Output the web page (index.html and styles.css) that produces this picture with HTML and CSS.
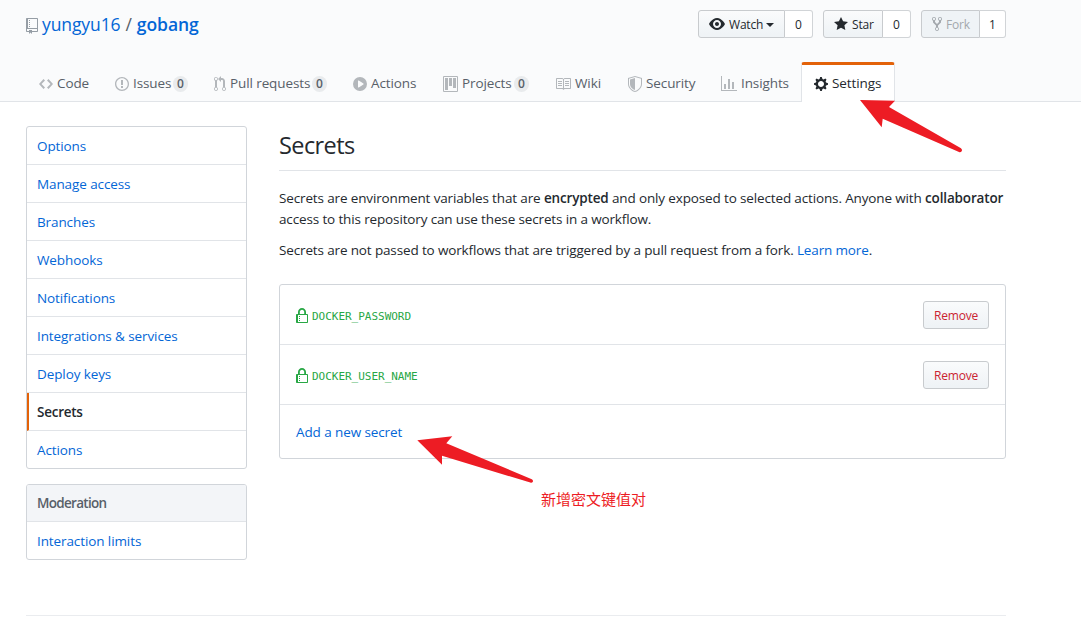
FILE: index.html
```html
<!DOCTYPE html>
<html lang="en">
<head>
<meta charset="utf-8">
<title>Secrets · gobang</title>
<link rel="stylesheet" href="styles.css">
</head>
<body>
<header class="pagehead">
  <div class="pagehead-top">
    <h1 class="repo-title">
      <svg class="repo-icon" width="12" height="16" viewBox="0 0 12 16"><path d="M4 9H3V8h1v1zm0-3H3v1h1V6zm0-2H3v1h1V4zm0-2H3v1h1V2zm8-1v12c0 .55-.45 1-1 1H6v2l-1.500-1.500L3 16v-2H1c-.55 0-1-.45-1-1V1c0-.55.45-1 1-1h10c.55 0 1 .45 1 1zm-1 10H1v2h2v-1h3v1h5v-2zm0-10H2v9h9V1z"/></svg>
      <a class="owner" href="#">yungyu16</a><span class="slash">/</span><a class="repo" href="#">gobang</a>
    </h1>
    <div class="social">
      <div class="social-group watch">
        <button class="btn social-btn"><svg width="16" height="16" viewBox="0 0 16 16"><path d="M8.060 2C3 2 0 8 0 8s3 6 8.060 6C13 14 16 8 16 8s-3-6-7.940-6zM8 12c-2.200 0-4-1.780-4-4 0-2.200 1.800-4 4-4 2.220 0 4 1.800 4 4 0 2.220-1.780 4-4 4zm2-4c0 1.110-.89 2-2 2-1.110 0-2-.89-2-2 0-1.110.89-2 2-2 1.110 0 2 .89 2 2z"/></svg><span>Watch</span><i class="caret"></i></button><a class="social-count" href="#">0</a>
      </div>
      <div class="social-group star">
        <button class="btn social-btn"><svg width="14" height="16" viewBox="0 0 14 16"><path d="M14 6l-4.900-.64L7 1 4.900 5.360 0 6l3.600 3.260L2.670 14 7 11.670 11.330 14l-.93-4.740L14 6z"/></svg><span>Star</span></button><a class="social-count" href="#">0</a>
      </div>
      <div class="social-group fork">
        <button class="btn social-btn disabled"><svg width="10" height="16" viewBox="0 0 10 16"><path d="M8 1a1.993 1.993 0 0 0-1 3.720V6L5 8 3 6V4.720A1.993 1.993 0 0 0 2 1a1.993 1.993 0 0 0-1 3.720V6.500l3 3v1.780A1.993 1.993 0 0 0 5 15a1.993 1.993 0 0 0 1-3.720V9.500l3-3V4.720A1.993 1.993 0 0 0 8 1zM2 4.200C1.340 4.200.8 3.650.8 3c0-.65.55-1.200 1.200-1.200.65 0 1.200.55 1.200 1.200 0 .65-.55 1.200-1.200 1.200zm3 10c-.66 0-1.200-.55-1.200-1.200 0-.65.55-1.200 1.200-1.200.65 0 1.200.55 1.200 1.200 0 .65-.55 1.200-1.200 1.200zm3-10c-.66 0-1.200-.55-1.200-1.200 0-.65.55-1.200 1.200-1.200.65 0 1.200.55 1.200 1.200 0 .65-.55 1.200-1.200 1.200z"/></svg><span>Fork</span></button><a class="social-count" href="#">1</a>
      </div>
    </div>
  </div>
  <nav class="tabs">
    <a class="tab tab-code" href="#"><svg width="14" height="16" viewBox="0 0 14 16"><path d="M9.500 3L8 4.500 11.500 8 8 11.500 9.500 13 14 8 9.500 3zm-5 0L0 8l4.500 5L6 11.500 2.500 8 6 4.500 4.500 3z"/></svg><span class="label">Code</span></a>
    <a class="tab tab-issues" href="#"><svg width="14" height="16" viewBox="0 0 14 16"><path d="M7 2.300c3.140 0 5.700 2.560 5.700 5.700s-2.560 5.700-5.700 5.700A5.710 5.710 0 0 1 1.300 8c0-3.140 2.560-5.700 5.700-5.700zM7 1C3.140 1 0 4.140 0 8s3.140 7 7 7 7-3.140 7-7-3.140-7-7-7zm1 3H6v5h2V4zm0 6H6v2h2v-2z"/></svg><span class="label">Issues</span><span class="counter">0</span></a>
    <a class="tab tab-pulls" href="#"><svg width="12" height="16" viewBox="0 0 12 16"><path d="M11 11.280V5c-.03-.78-.34-1.470-.94-2.060C9.460 2.350 8.780 2.030 8 2H7V0L4 3l3 3V4h1c.27.02.48.11.69.31.21.2.3.42.31.69v6.280A1.993 1.993 0 0 0 10 15a1.993 1.993 0 0 0 1-3.720zm-1 2.920c-.66 0-1.200-.55-1.200-1.200 0-.65.55-1.200 1.200-1.200.65 0 1.200.55 1.200 1.200 0 .65-.55 1.200-1.200 1.200zM4 3c0-1.110-.89-2-2-2a1.993 1.993 0 0 0-1 3.720v6.560A1.993 1.993 0 0 0 2 15a1.993 1.993 0 0 0 1-3.720V4.720c.59-.34 1-.98 1-1.720zm-.8 10c0 .66-.55 1.200-1.200 1.200-.65 0-1.200-.55-1.200-1.200 0-.65.55-1.200 1.200-1.200.65 0 1.200.55 1.200 1.200zM2 4.200C1.340 4.200.8 3.650.8 3c0-.65.55-1.200 1.200-1.200.65 0 1.200.55 1.200 1.200 0 .65-.55 1.200-1.200 1.200z"/></svg><span class="label">Pull requests</span><span class="counter">0</span></a>
    <a class="tab tab-actions" href="#"><svg width="14" height="16" viewBox="0 0 14 16"><path fill-rule="evenodd" d="M14 8A7 7 0 1 1 0 8a7 7 0 0 1 14 0zm-8.223 3.482l4.599-3.066a.5.5 0 0 0 0-.832L5.777 4.518A.5.5 0 0 0 5 4.934v6.132a.5.5 0 0 0 .777.416z"/></svg><span class="label">Actions</span></a>
    <a class="tab tab-projects" href="#"><svg width="15" height="16" viewBox="0 0 15 16"><path fill-rule="evenodd" d="M10 12h3V2h-3v10zm-4-2h3V2H6v8zm-4 4h3V2H2v12zm-1 1h13V1H1v14zM14 0H1a1 1 0 0 0-1 1v14a1 1 0 0 0 1 1h13a1 1 0 0 0 1-1V1a1 1 0 0 0-1-1z"/></svg><span class="label">Projects</span><span class="counter">0</span></a>
    <a class="tab tab-wiki" href="#"><svg width="16" height="16" viewBox="0 0 16 16"><path d="M3 5h4v1H3V5zm0 3h4V7H3v1zm0 2h4V9H3v1zm11-5h-4v1h4V5zm0 2h-4v1h4V7zm0 2h-4v1h4V9zm2-6v9c0 .55-.45 1-1 1H9.500l-1 1-1-1H2c-.55 0-1-.45-1-1V3c0-.55.45-1 1-1h5.500l1 1 1-1H15c.55 0 1 .45 1 1zm-8 .5L7.500 3H2v9h6V3.500zm7-.5H9.500l-.5.5V12h6V3z"/></svg><span class="label">Wiki</span></a>
    <a class="tab tab-security" href="#"><svg width="14" height="16" viewBox="0 0 14 16"><path fill-rule="evenodd" d="M0 2l7-2 7 2v6.020C14 12.690 8.690 16 7 16c-1.690 0-7-3.310-7-7.980V2zm1 .75L7 1l6 1.750v5.268C13 12.104 8.449 15 7 15c-1.449 0-6-2.896-6-6.982V2.750zm1 .75L7 2v12c-1.207 0-5-2.482-5-5.985V3.500z"/></svg><span class="label">Security</span></a>
    <a class="tab tab-insights" href="#"><svg width="16" height="16" viewBox="0 0 16 16"><path d="M16 14v1H0V0h1v14h15zM5 13H3V8h2v5zm4 0H7V3h2v10zm4 0h-2V6h2v7z"/></svg><span class="label">Insights</span></a>
    <a class="tab tab-settings selected" href="#"><svg width="14" height="16" viewBox="0 0 14 16"><path fill-rule="evenodd" d="M14 8.770v-1.600l-1.940-.64-.45-1.090.88-1.840-1.130-1.130-1.810.91-1.090-.45-.69-1.920h-1.600l-.63 1.940-1.110.45-1.840-.88-1.130 1.130.91 1.810-.45 1.090L0 7.230v1.590l1.940.64.45 1.090-.88 1.840 1.130 1.130 1.810-.91 1.090.45.69 1.920h1.590l.63-1.940 1.110-.45 1.840.88 1.130-1.130-.92-1.810.47-1.090L14 8.750v.02zM7 11c-1.660 0-3-1.340-3-3s1.340-3 3-3 3 1.340 3 3-1.340 3-3 3z"/></svg><span class="label">Settings</span></a>
  </nav>
</header>
<div class="container">
  <aside class="sidebar">
    <nav class="menu">
      <a class="menu-item" href="#">Options</a>
      <a class="menu-item" href="#">Manage access</a>
      <a class="menu-item" href="#">Branches</a>
      <a class="menu-item" href="#">Webhooks</a>
      <a class="menu-item" href="#">Notifications</a>
      <a class="menu-item" href="#">Integrations &amp; services</a>
      <a class="menu-item" href="#">Deploy keys</a>
      <a class="menu-item current" href="#">Secrets</a>
      <a class="menu-item" href="#">Actions</a>
    </nav>
    <nav class="menu">
      <h3 class="menu-heading">Moderation</h3>
      <a class="menu-item" href="#">Interaction limits</a>
    </nav>
  </aside>
  <main class="content">
    <h2 class="subhead">Secrets</h2>
    <p class="intro">Secrets are environment variables that are <b>encrypted</b> and only exposed to selected actions. Anyone with <b>collaborator</b><br>access to this repository can use these secrets in a workflow.</p>
    <p class="intro">Secrets are not passed to workflows that are triggered by a pull request from a fork. <a href="#">Learn more</a>.</p>
    <div class="box">
      <div class="box-row">
        <div class="secret"><svg width="12" height="16" viewBox="0 0 12 16"><path fill-rule="evenodd" d="M4 13H3v-1h1v1zm8-6v7c0 .55-.45 1-1 1H1c-.55 0-1-.45-1-1V7c0-.55.45-1 1-1h1V4c0-2.200 1.800-4 4-4s4 1.800 4 4v2h1c.55 0 1 .45 1 1zM3.800 6h4.410V4c0-1.220-.98-2.200-2.200-2.200-1.220 0-2.200.98-2.200 2.200v2H3.800zM11 7H2v7h9V7zM4 8H3v1h1V8zm0 2H3v1h1v-1z"/></svg><code>DOCKER_PASSWORD</code></div>
        <button class="btn btn-danger">Remove</button>
      </div>
      <div class="box-row">
        <div class="secret"><svg width="12" height="16" viewBox="0 0 12 16"><path fill-rule="evenodd" d="M4 13H3v-1h1v1zm8-6v7c0 .55-.45 1-1 1H1c-.55 0-1-.45-1-1V7c0-.55.45-1 1-1h1V4c0-2.200 1.800-4 4-4s4 1.800 4 4v2h1c.55 0 1 .45 1 1zM3.800 6h4.410V4c0-1.220-.98-2.200-2.200-2.200-1.220 0-2.200.98-2.200 2.200v2H3.800zM11 7H2v7h9V7zM4 8H3v1h1V8zm0 2H3v1h1v-1z"/></svg><code>DOCKER_USER_NAME</code></div>
        <button class="btn btn-danger">Remove</button>
      </div>
      <div class="box-row box-add"><a class="add-link" href="#">Add a new secret</a></div>
    </div>
  </main>
</div>
<footer class="footer"></footer>
<svg class="annotations" width="1081" height="639" viewBox="0 0 1081 639">
  <path d="M860 100L895 100.700 889 107 961 148.300Q963 150 961.500 151.500 960.500 152.600 959 152L882.700 118.700 881.700 127.300Z"/>
  <path d="M417.300 440.300L452.300 436.300 446.300 443.300 531.800 479.200Q533.600 480.300 532.700 482 531.800 483.200 530.300 482.600L442 455.700 442 464.700Z"/>
</svg>
<div class="note" lang="zh-CN">新增密文键值对</div>
</body>
</html>
```

FILE: styles.css
```css
* { box-sizing: border-box; }

body {
  margin: 0;
  height: 639px;
  overflow: hidden;
  background: #fff;
  color: #24292e;
  font: 13.5px/21px "Open Sans", "Noto Sans", sans-serif;
  letter-spacing: -0.1px;
}

a { color: #0366d6; text-decoration: none; }
svg { fill: currentColor; flex: none; display: block; }

.pagehead {
  height: 102px;
  padding: 10px 75px 0 26px;
  background: #fafbfc;
  border-bottom: 1px solid #e1e4e8;
  display: flex;
  flex-direction: column;
  justify-content: space-between;
}
.pagehead-top { display: flex; justify-content: space-between; align-items: flex-start; }

.repo-title {
  margin: 0;
  display: flex;
  align-items: center;
  height: 28px;
  font-size: 17.5px;
  font-weight: 400;
}
.repo-icon { color: #959da5; margin: 3px 4px 0 0; }
.slash { color: #586069; margin: 0 5px; }
.repo { font-weight: 600; letter-spacing: -0.05px; }

.social { display: flex; gap: 10px; }
.social-group { display: flex; height: 28px; }
.watch { width: 115px; }
.star { width: 88px; }
.fork { width: 85px; }

.btn {
  height: 28px;
  padding: 2px 10px 0;
  border: 1px solid #c8cbce;
  border-radius: 3px;
  background: linear-gradient(180deg, #fafbfc, #eff3f6 90%);
  color: #24292e;
  font: 500 12px/20px "Open Sans", "Noto Sans", sans-serif;
  letter-spacing: -0.2px;
}
.social-btn {
  flex: 1;
  min-width: 0;
  display: flex;
  align-items: center;
  gap: 4px;
  padding: 1px 0 0 10px;
  border-radius: 3px 0 0 3px;
}
.social-btn svg { margin-top: -1px; }
.social-btn.disabled { color: #a3a8ad; background: #eff3f6; }
.caret { margin-left: -1px; border: 4px solid transparent; border-top-color: currentColor; border-bottom: 0; }
.social-count {
  flex: none;
  width: 28px;
  border: 1px solid #d1d4d7;
  border-left: 0;
  border-radius: 0 3px 3px 0;
  background: #fff;
  color: #24292e;
  font-size: 12px;
  font-weight: 500;
  line-height: 28px;
  text-align: center;
}
.fork .social-count { width: 26px; }

.tabs { display: flex; margin-bottom: -1px; }
.tab {
  flex: none;
  display: flex;
  align-items: center;
  height: 40px;
  padding: 1px 12px 0;
  border: 1px solid transparent;
  border-top: 3px solid transparent;
  border-bottom: 0;
  border-radius: 3px 3px 0 0;
  color: #586069;
  white-space: nowrap;
}
.tab svg { color: #b3b7bb; margin-right: 4px; }
.tab .label { padding-bottom: 1px; }
.tab.selected { color: #24292e; background: #fff; border-color: #e36209 #e1e4e8 transparent; }
.tab.selected svg { color: #24292e; }
.tab-code { width: 76px; }
.tab-issues { width: 99px; }
.tab-pulls { width: 139px; }
.tab-actions { width: 90px; }
.tab-projects { width: 112px; }
.tab-wiki { width: 73px; }
.tab-security { width: 93px; }
.tab-insights { width: 93px; }
.tab-settings { width: 94px; }
.counter {
  flex: none;
  margin: -1px 0 0 auto;
  width: 15px;
  height: 16px;
  border-radius: 20px;
  background: #e9ebed;
  font-size: 12px;
  font-weight: 600;
  line-height: 16px;
  text-align: center;
}

.container { display: flex; gap: 32px; padding: 24px 75px 0 26px; }
.sidebar { width: 221px; display: flex; flex-direction: column; gap: 15px; }
.menu { border: 1px solid #d1d5da; border-radius: 3px; overflow: hidden; }
.menu-item {
  display: block;
  height: 38px;
  padding: 9px 10px 0;
  border-bottom: 1px solid #e1e4e8;
}
.menu-item:last-child { border-bottom: 0; height: 37px; }
.menu-item.current {
  padding-left: 8px;
  border-left: 2px solid #e36209;
  color: #24292e;
  font-weight: 600;
  letter-spacing: -0.25px;
}
.menu-heading {
  margin: 0;
  height: 37px;
  padding: 8px 10px 0;
  border-bottom: 1px solid #e1e4e8;
  background: #f3f5f8;
  color: #586069;
  font-size: 13.5px;
  font-weight: 600;
  letter-spacing: -0.7px;
}
.menu-heading { letter-spacing: -0.7px; }

.content { flex: 1; min-width: 0; }
.subhead {
  margin: 0 0 17px;
  height: 45px;
  padding-top: 1px;
  border-bottom: 1px solid #e1e4e8;
  font-size: 23.5px;
  font-weight: 400;
  line-height: 36px;
  letter-spacing: -0.6px;
}
.intro { margin: 0 0 10px; white-space: nowrap; letter-spacing: -0.14px; }
.intro b { font-weight: 600; letter-spacing: -0.15px; }

.box { margin-top: 23px; border: 1px solid #d1d5da; border-radius: 3px; }
.box-row {
  display: flex;
  align-items: center;
  justify-content: space-between;
  height: 60px;
  padding: 0 16px;
  border-bottom: 1px solid #e1e4e8;
}
.box-row:last-child { border-bottom: 0; height: 53px; }
.add-link { padding-top: 2px; }
.secret { display: flex; align-items: center; gap: 4px; padding-top: 2px; color: #28a745; }
.secret code { padding-top: 2px; font: 11px/18px "DejaVu Sans Mono", "Liberation Mono", monospace; letter-spacing: -0.02px; }
.btn-danger { width: 66px; padding: 2px 0 0; color: #cb2431; }

.footer { margin: 55px 75px 0 26px; border-top: 1px solid #eaecef; }

.annotations { position: absolute; left: 0; top: 0; fill: #ed1c24; pointer-events: none; }
.note {
  position: absolute;
  left: 541px;
  top: 488px;
  color: #ed1c24;
  font: 15px/21px "Noto Sans CJK SC", sans-serif;
  letter-spacing: 0;
  white-space: nowrap;
}
```
